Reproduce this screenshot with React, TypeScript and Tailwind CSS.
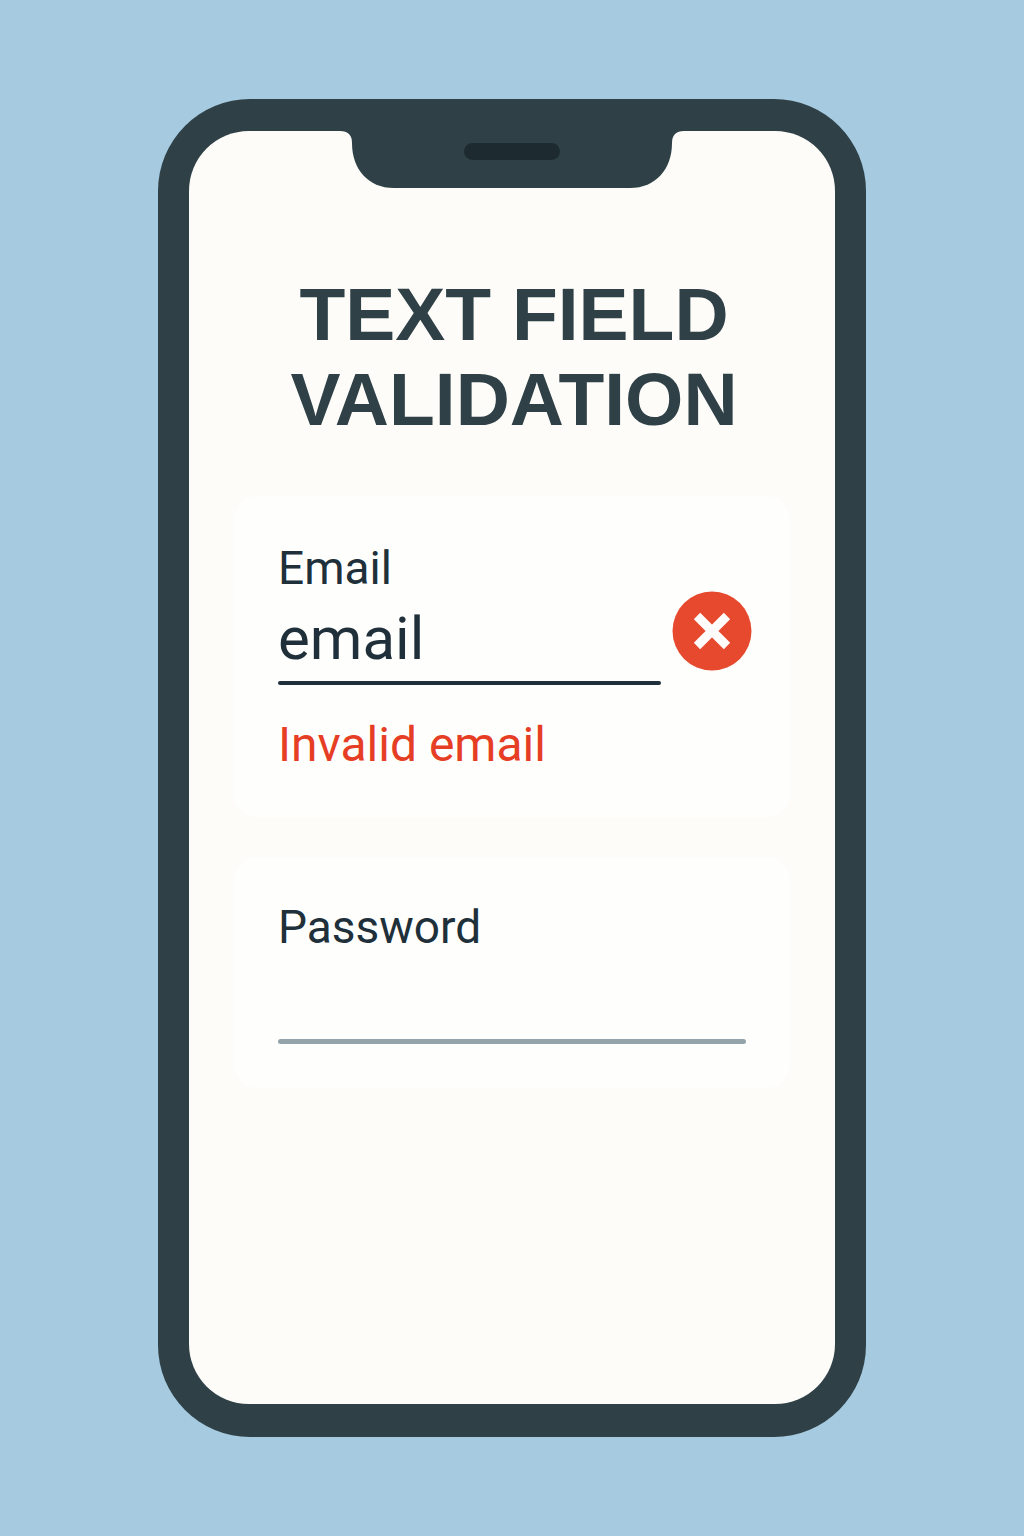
export default function App() {
  return (
    <main className="flex min-h-screen justify-center bg-[#a6cbe0] px-6 pt-[99px] pb-[99px] font-['Roboto',sans-serif] text-[#20303a]">
      <section className="flex w-full max-w-[708px] rounded-[92px] bg-[#2f4047] px-[31px] pt-8 pb-[33px]">
        <div className="flex w-full flex-col rounded-[60px] bg-[#fdfcf8]">
          <div className="flex justify-center">
            <svg className="h-[57px] w-[344px]" viewBox="0 0 344 57" aria-hidden="true">
              <path d="M0 0H344Q332 0 332 12C332 38 316 57 290 57H54C28 57 12 38 12 12Q12 0 0 0Z" fill="#2f4047" />
              <rect x="124" y="12" width="96" height="17" rx="8.5" fill="#1d2a2f" />
            </svg>
          </div>
          <h1 className="mt-[84px] pl-1 text-center font-['Liberation_Sans',sans-serif] text-[75px] leading-[85px] font-bold text-[#2f4047]">
            <span className="block">TEXT FIELD</span>
            <span className="block">VALIDATION</span>
          </h1>
          <form className="mx-[45px] mt-[54px] flex flex-col gap-10" noValidate>
            <div className="rounded-3xl bg-[#fefefd] pt-11 pr-[38px] pb-11 pl-11">
              <div className="flex items-end gap-[11px]">
                <div className="min-w-0 flex-1">
                  <label htmlFor="email" className="block text-[46px] leading-[56px]">Email</label>
                  <input id="email" type="email" defaultValue="email" aria-invalid="true" aria-describedby="email-error" className="block h-[85px] w-full bg-transparent text-[60px] outline-none" />
                  <div className="h-1 rounded-full bg-[#20303a]" />
                </div>
                <svg className="mb-[14px] h-20 w-20 shrink-0" viewBox="0 0 80 80" aria-hidden="true">
                  <circle cx="40" cy="40" r="39.5" fill="#e6492d" />
                  <path d="M25 25L55 55M55 25L25 55" stroke="#fffdfb" strokeWidth="9" />
                </svg>
              </div>
              <p id="email-error" className="mt-8 text-[48px] leading-[56px] text-[#e63e25]">Invalid email</p>
            </div>
            <div className="rounded-3xl bg-[#fefefd] px-11 pt-[42px] pb-11">
              <label htmlFor="password" className="block text-[46px] leading-[56px]">Password</label>
              <input id="password" type="password" className="block h-[84px] w-full bg-transparent text-[60px] outline-none" />
              <div className="h-[5px] rounded-full bg-[#93a5aa]" />
            </div>
          </form>
        </div>
      </section>
    </main>
  )
}
